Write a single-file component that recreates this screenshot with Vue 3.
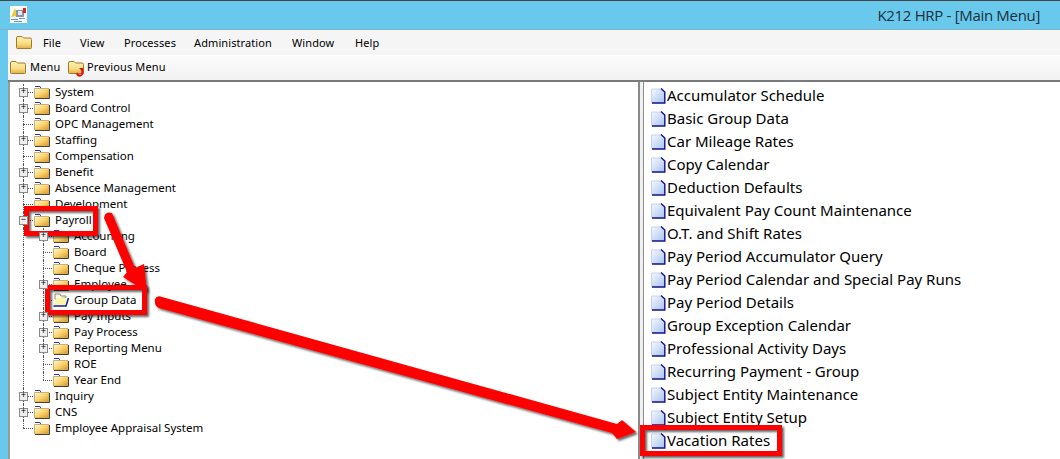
<script setup>
const tree = [
  { c: ['p'], t: 'System' },
  { c: ['p'], t: 'Board Control' },
  { c: ['t'], t: 'OPC Management' },
  { c: ['p'], t: 'Staffing' },
  { c: ['t'], t: 'Compensation' },
  { c: ['p'], t: 'Benefit' },
  { c: ['p'], t: 'Absence Management' },
  { c: ['t'], t: 'Development' },
  { c: ['m'], t: 'Payroll' },
  { c: ['v', 'p'], t: 'Accounting' },
  { c: ['v', 't'], t: 'Board' },
  { c: ['v', 't'], t: 'Cheque Process' },
  { c: ['v', 'p'], t: 'Employee' },
  { c: ['v', 't'], t: 'Group Data', open: true },
  { c: ['v', 'p'], t: 'Pay Inputs' },
  { c: ['v', 'p'], t: 'Pay Process' },
  { c: ['v', 'p'], t: 'Reporting Menu' },
  { c: ['v', 't'], t: 'ROE' },
  { c: ['v', 'l'], t: 'Year End' },
  { c: ['p'], t: 'Inquiry' },
  { c: ['p'], t: 'CNS' },
  { c: ['l'], t: 'Employee Appraisal System' }
]
const list = [
  'Accumulator Schedule', 'Basic Group Data', 'Car Mileage Rates', 'Copy Calendar',
  'Deduction Defaults', 'Equivalent Pay Count Maintenance', 'O.T. and Shift Rates',
  'Pay Period Accumulator Query', 'Pay Period Calendar and Special Pay Runs',
  'Pay Period Details', 'Group Exception Calendar', 'Professional Activity Days',
  'Recurring Payment - Group', 'Subject Entity Maintenance', 'Subject Entity Setup', 'Vacation Rates'
]
const menus = ['File', 'View', 'Processes', 'Administration', 'Window', 'Help']
</script>

<template>
  <div class="screen">
    <header class="title">
      <svg class="appicon" width="17" height="17" viewBox="0 0 17 17">
        <defs>
          <linearGradient id="bigf" x1="0" y1="0" x2="0" y2="1">
            <stop offset="0" stop-color="#fff3b8"/>
            <stop offset="0.6" stop-color="#f8dc82"/>
            <stop offset="1" stop-color="#e0b048"/>
          </linearGradient>
          <linearGradient id="fg" x1="0" y1="0" x2="1" y2="1">
            <stop offset="0" stop-color="#fff8d8"/>
            <stop offset="0.5" stop-color="#fbd470"/>
            <stop offset="1" stop-color="#d8921c"/>
          </linearGradient>
          <linearGradient id="pg" x1="0" y1="0" x2="1" y2="1">
            <stop offset="0" stop-color="#f6f9fe"/>
            <stop offset="1" stop-color="#a9c4f0"/>
          </linearGradient>
        </defs>
        <rect width="17" height="17" fill="#fff"/>
        <path d="M1 11 5 2l3 8z" fill="#e6d23a"/>
        <rect x="6" y="4" width="8" height="7" fill="#8a96a8"/>
        <rect x="8" y="5" width="4" height="4" fill="#dfe8f5"/>
        <rect x="13" y="2" width="3" height="5" fill="#e02020"/>
        <path d="M1 13h7v1H1zM4 15h8v1H4zM9 12h6v1H9z" fill="#5a96e0"/>
      </svg>
      <span class="caption">K212 HRP - [Main Menu]</span>
    </header>
    <div class="window">
      <nav class="menubar">
        <svg class="bigfolder" width="16" height="13" viewBox="0 0 16 13">
          <path d="M.5 3V2Q.5.5 2 .5h4L7.500 2H14q1.500 0 1.500 1.500v8q0 1-1 1h-13q-1 0-1-1z" fill="url(#bigf)" stroke="#a07c28"/>
        </svg>
        <span v-for="m in menus" :key="m" class="menu" :class="'m-' + m">{{ m }}</span>
      </nav>
      <div class="toolbar">
        <svg class="bigfolder" width="16" height="13" viewBox="0 0 16 13">
          <path d="M.5 3V2Q.5.5 2 .5h4L7.500 2H14q1.500 0 1.500 1.500v8q0 1-1 1h-13q-1 0-1-1z" fill="url(#bigf)" stroke="#a07c28"/>
        </svg>
        <span class="tool first">Menu</span>
        <span class="prev">
          <svg width="17" height="16" viewBox="0 0 17 16">
            <path d="M.5 3V2Q.5.500 2 .500h4L7.500 2H14q1.500 0 1.500 1.500v8q0 1-1 1h-13q-1 0-1-1z" fill="url(#bigf)" stroke="#a07c28"/>
            <path d="M13 8.500a3 3 0 1 1-4 3.500 3 3 0 0 0 3 3q3-1 2-5" fill="none" stroke="#e01010" stroke-width="1.600"/>
            <path d="M11 7h4v4z" fill="#e01010"/>
          </svg>
        </span>
        <span class="tool">Previous Menu</span>
      </div>
      <main class="panes">
        <section class="tree">
          <div v-for="r in tree" :key="r.t" class="row">
            <span v-for="(c, i) in r.c" :key="i" class="cell" :class="['c-' + c, 'lvl' + i]">
              <b v-if="c === 'p' || c === 'm'" class="box">{{ c === 'p' ? '+' : '−' }}</b>
            </span>
            <svg v-if="!r.open" class="folder" width="16" height="14" viewBox="0 0 16 14">
              <path d="M1 1.500h5l1 2" fill="none" stroke="#2a3aa8"/>
              <path d="M.5 3.500h14.500v9.500H.5z" fill="url(#fg)" stroke="#c8b070"/>
              <path d="M15.500 4v9.500H1" fill="none" stroke="#4a4030"/>
            </svg>
            <svg v-else class="folder" width="16" height="14" viewBox="0 0 16 14">
              <path d="M2 1h5l1 2h5v2L2 6z" fill="#fffbe0" stroke="#8a8a70"/>
              <path d="M.5 13 3 5h12.500L13 13z" fill="#fff4a8"/>
              <path d="M15.500 5 13 13H.5" fill="none" stroke="#1020b0" stroke-width="1.500"/>
            </svg>
            <span class="label">{{ r.t }}</span>
          </div>
        </section>
        <div class="splitter"></div>
        <section class="list">
          <div v-for="t in list" :key="t" class="item">
            <svg width="15" height="16" viewBox="0 0 15 16">
              <path d="M.500 1h10l3 3v10.500H.500z" fill="url(#pg)" stroke="#c4d2ec"/>
              <path d="M10 .5l3.800 3.500V15H1" fill="none" stroke="#10108c" stroke-width="1.400"/>
            </svg>
            <span>{{ t }}</span>
          </div>
        </section>
      </main>
    </div>

    <svg class="overlay" width="1060" height="459" viewBox="0 0 1060 459">
      <defs>
        <filter id="sh" x="-20%" y="-20%" width="140%" height="140%">
          <feDropShadow dx="2" dy="2" stdDeviation="1.200" flood-color="#000" flood-opacity="0.6"/>
        </filter>
      </defs>
      <g filter="url(#sh)" fill="#f00">
        <path d="M104 218Q105 211 112 213L135 268 144 264 147 292 123 277 127 272z"/>
        <path d="M155 299Q157 295 162 297L617 424 622 420 636 432 617 439 612 433 159 308Q154 306 155 299z"/>
      </g>
      <g filter="url(#sh)" fill="none" stroke="#f00" stroke-width="5">
        <rect x="26.500" y="208.500" width="69" height="25"/>
        <rect x="47.500" y="287.500" width="97" height="25"/>
        <rect x="642.500" y="427.500" width="137" height="26"/>
      </g>
    </svg>
  </div>
</template>

<style>
html, body { margin: 0; background: #fff; overflow: hidden; }
</style>

<style scoped>
.screen {
  position: relative;
  width: 1060px;
  height: 459px;
  overflow: hidden;
  background: #69c9ec;
  font-family: "Noto Sans", "Liberation Sans", sans-serif;
  color: #000;
  display: flex;
  flex-direction: column;
}
.title {
  height: 30px;
  flex: none;
  box-sizing: border-box;
  border-top: 1px solid #444;
  border-bottom: 1px solid #7fb3cc;
  display: flex;
  align-items: center;
  justify-content: space-between;
  padding: 0 20px 0 10px;
}
.appicon { margin-top: -1px; }
.caption { font: 15px "Open Sans", sans-serif; letter-spacing: -0.32px; color: #1c2f3c; }
.window {
  flex: 1;
  margin-left: 8px;
  display: flex;
  flex-direction: column;
  min-height: 0;
  background: #f0f0f0;
}
.menubar {
  height: 25px;
  flex: none;
  background: #f5f5f5;
  display: flex;
  align-items: center;
  padding-left: 8px;
  font-size: 11px;
}
.menubar .bigfolder { margin-right: 11px; }
.menu { display: block; letter-spacing: 0.1px; }
.m-File { width: 37px; }
.m-View { width: 44px; }
.m-Processes { width: 70px; }
.m-Administration { width: 98px; }
.m-Window { width: 63px; }
.toolbar {
  height: 27px;
  flex: none;
  box-sizing: border-box;
  background: linear-gradient(#fcfcfc, #f1f1f1);
  border-bottom: 2px solid #7a7a7a;
  display: flex;
  align-items: center;
  padding-left: 2px;
  font-size: 11px;
}
.toolbar .bigfolder { margin-right: 4px; }
.tool { margin-top: -2px; letter-spacing: 0.15px; }
.tool.first { width: 38px; }
.prev { display: flex; margin-right: 2px; margin-top: 2px; }
.panes { flex: 1; display: flex; min-height: 0; background: #fff; }
.tree {
  width: 630px;
  flex: none;
  box-sizing: border-box;
  border-left: 2px solid #9a9a9a;
  padding: 2px 0 0 4px;
  font-size: 11.500px;
}
.row { height: 16px; display: flex; align-items: center; }
.cell { position: relative; height: 16px; flex: none; }
.lvl0 { width: 20px; }
.lvl1 { width: 19px; }
.cell::before, .cell::after { content: ""; position: absolute; }
.cell::before { left: 9px; top: 0; bottom: 0; border-left: 1px dotted #555; }
.cell::after { left: 9px; right: 1px; top: 8px; border-top: 1px dotted #555; }
.c-l::before { bottom: 8px; }
.c-v::after { display: none; }
.box {
  position: absolute;
  z-index: 1;
  left: 5px;
  top: 4px;
  width: 9px;
  height: 9px;
  box-sizing: border-box;
  border: 1px solid #8a8a8a;
  background: #eee;
  font: 400 9px/7px "Liberation Mono", monospace;
  text-align: center;
}
.folder { flex: none; }
.label { margin: -2px 0 0 5px; white-space: nowrap; }
.splitter {
  width: 6px;
  flex: none;
  box-sizing: border-box;
  background: #f0f0f0;
  border-left: 2px solid #8a8a8a;
  border-right: 1px solid #8a8a8a;
}
.list { flex: 1; padding: 2px 0 0 7px; font-size: 15px; }
.item { height: 23px; display: flex; align-items: center; white-space: nowrap; }
.item svg { margin-right: 1px; flex: none; }
.item span { margin-top: -2px; }
.overlay { position: absolute; left: 0; top: 0; pointer-events: none; }
</style>
